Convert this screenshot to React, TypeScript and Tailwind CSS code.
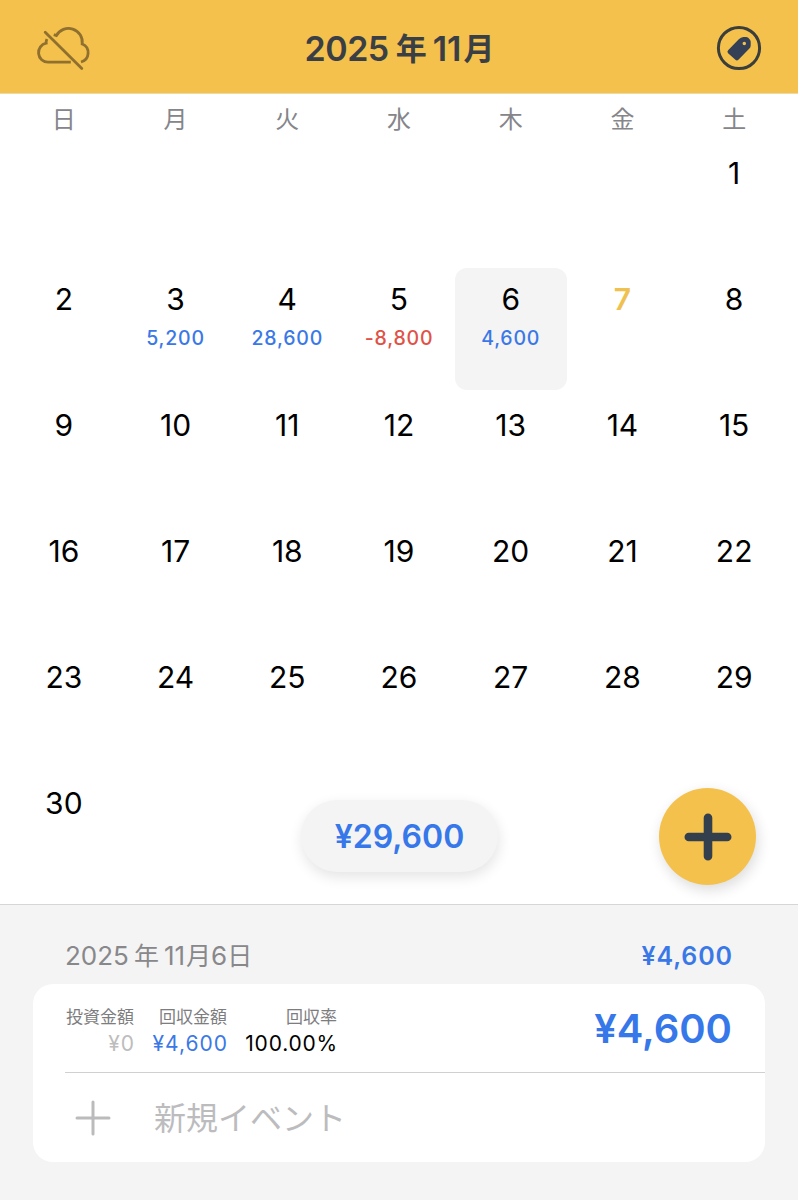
import React from "react";

type Day = { day: number; amount?: string; negative?: boolean; selected?: boolean; today?: boolean };

const weekdays = ["日", "月", "火", "水", "木", "金", "土"];

const entries: Record<number, Omit<Day, "day">> = {
  3: { amount: "5,200" },
  4: { amount: "28,600" },
  5: { amount: "-8,800", negative: true },
  6: { amount: "4,600", selected: true },
  7: { today: true },
};

const days: Day[] = Array.from({ length: 30 }, (_, i) => ({ day: i + 1, ...entries[i + 1] }));

function CloudOffIcon() {
  return (
    <svg className="h-[50px] w-[60px]" viewBox="34 24 60 50" fill="none" stroke="#8f702e" strokeWidth="2.8">
      <path d="M70.8 63.2H48A9.6 9.6 0 0 1 46.2 44.2Q45.9 42.2 46.9 40" />
      <path d="M53.8 35.6L56.4 36.6A13.8 13.8 0 0 1 82.2 45A9.5 9.5 0 0 1 81 63" />
      <path d="M45.2 33.2L81.8 69.6" strokeLinecap="round" />
    </svg>
  );
}

function TagIcon() {
  return (
    <svg className="h-[46px] w-[46px]" viewBox="0 0 46 46" fill="none">
      <circle cx="23" cy="23" r="20.6" stroke="#3b3e3a" strokeWidth="3" />
      <path
        fillRule="evenodd"
        fill="#334055"
        d="M12.1 25.2L22.8 14.2Q24.8 12.3 27.4 12.1L29.8 11.9Q31.2 11.8 32.2 12.8L33.6 14.2Q34.7 15.3 34.7 16.8V20.4Q34.7 22.2 33.4 23.5L22.4 34.8Q20.9 36.2 19.4 34.8L12.1 28.2Q10.7 26.7 12.1 25.2ZM28.3 16.7a1.75 1.75 0 1 0 0 3.5a1.75 1.75 0 1 0 0-3.5Z"
      />
    </svg>
  );
}

function DayCell({ day, amount, negative, selected, today }: Day) {
  return (
    <div
      className={`flex h-[122px] flex-col items-center rounded-[12px] pt-[13px] ${selected ? "bg-[#f4f4f4]" : ""} ${
        day === 1 ? "col-start-7" : ""
      }`}
    >
      <span className={`text-[30px] leading-9 ${today ? "font-semibold text-[#efc150]" : "text-black"}`}>{day}</span>
      {amount && (
        <span
          className={`mt-[9px] text-[19.5px] leading-6 font-medium tracking-[0.8px] ${
            negative ? "text-[#e05248]" : "text-[#3b78e7]"
          }`}
        >
          {amount}
        </span>
      )}
    </div>
  );
}

export default function App() {
  return (
    <div className="flex h-[1200px] w-[798px] flex-col overflow-hidden bg-white font-['Inter','Noto_Sans_CJK_JP',sans-serif]">
      <header className="flex h-[94px] shrink-0 items-center justify-between border-b border-[#ecd9a8] bg-[#f4c14d] pt-[2px] pr-[36px] pl-[34px]">
        <CloudOffIcon />
        <h1 className="mt-[3px] mr-[11px] flex items-center font-semibold text-[#3a3f45]">
          <span className="text-[34px] leading-10 tracking-[-0.5px]">2025</span>
          <span className="ml-[7px] text-[31px] leading-10">年</span>
          <span className="ml-[6px] text-[34px] leading-10">11</span>
          <span className="ml-[2px] text-[31px] leading-10">月</span>
        </h1>
        <TagIcon />
      </header>

      <main className="relative h-[810px] shrink-0 px-2">
        <div className="grid h-[50px] grid-cols-7 items-center pt-[1px] text-center text-[24px] leading-[50px] text-[#85858a]">
          {weekdays.map((w) => (
            <span key={w}>{w}</span>
          ))}
        </div>
        <div className="mt-[-2px] grid grid-cols-7 gap-y-[4px]">
          {days.map((d) => (
            <DayCell key={d.day} {...d} />
          ))}
        </div>

        <div className="absolute top-[706px] left-[301px] flex h-[72px] w-[197px] items-center justify-center rounded-full bg-[#f4f4f4] pt-[2px] shadow-[1px_5px_14px_rgba(0,0,0,0.11)]">
          <span className="text-[32px] font-semibold text-[#3677ea]">¥29,600</span>
        </div>
        <button className="absolute top-[694px] left-[659px] flex h-[97px] w-[97px] items-center justify-center rounded-full bg-[#f4c14d] shadow-[2px_5px_14px_rgba(0,0,0,0.14)]">
          <svg className="h-[48px] w-[48px]" viewBox="0 0 48 48" stroke="#343f4e" strokeWidth="8.6" strokeLinecap="round">
            <path d="M24 4.8V43.2M4.8 24H43.2" />
          </svg>
        </button>
      </main>

      <section className="flex-1 border-t border-[#d6d6d6] bg-[#f4f4f4] px-[33px]">
        <div className="flex h-[79px] items-center justify-between px-[32px] pt-[23px]">
          <div className="flex items-center text-[26px] leading-9 text-[#88888b]">
            <span>2025</span>
            <span className="ml-[5px] text-[25px]">年</span>
            <span className="ml-[5px]">11</span>
            <span className="ml-[1px] text-[25px]">月</span>
            <span>6</span>
            <span className="text-[25px]">日</span>
          </div>
          <span className="text-[25px] leading-9 font-semibold tracking-[0.9px] text-[#3b78e7]">¥4,600</span>
        </div>

        <div className="h-[178px] rounded-[20px] bg-white pl-[32px]">
          <div className="flex h-[89px] items-start justify-between border-b border-[#d0d0d2] pr-[33px]">
            <div className="flex pt-[20px] text-right">
              <div className="flex w-[69px] flex-col">
                <span className="text-[17px] leading-[26px] text-[#7d7d80]">投資金額</span>
                <span className="mt-[1px] -mr-[1px] text-[21px] leading-[26px] tracking-[1px] text-[#bdbdbd]">¥0</span>
              </div>
              <div className="flex w-[93px] flex-col">
                <span className="text-[17px] leading-[26px] text-[#7d7d80]">回収金額</span>
                <span className="mt-[1px] -mr-[1px] text-[21px] leading-[26px] tracking-[1px] text-[#3b78e7]">¥4,600</span>
              </div>
              <div className="flex w-[110px] flex-col">
                <span className="text-[17px] leading-[26px] text-[#7d7d80]">回収率</span>
                <span className="mt-[1px] -mr-[1px] text-[21px] leading-[26px] tracking-[0.8px] text-black">100.00%</span>
              </div>
            </div>
            <span className="pt-[20px] text-[40px] leading-[50px] font-semibold text-[#3677ea]">¥4,600</span>
          </div>
          <div className="flex h-[89px] items-center pl-[10px]">
            <svg className="h-[36px] w-[36px]" viewBox="0 0 36 36" stroke="#bbbbbd" strokeWidth="3" strokeLinecap="round">
              <path d="M18 2V34M2 18H34" />
            </svg>
            <span className="mt-[2px] ml-[43px] text-[32px] leading-10 text-[#bcbcbe]">新規イベント</span>
          </div>
        </div>
      </section>
    </div>
  );
}
